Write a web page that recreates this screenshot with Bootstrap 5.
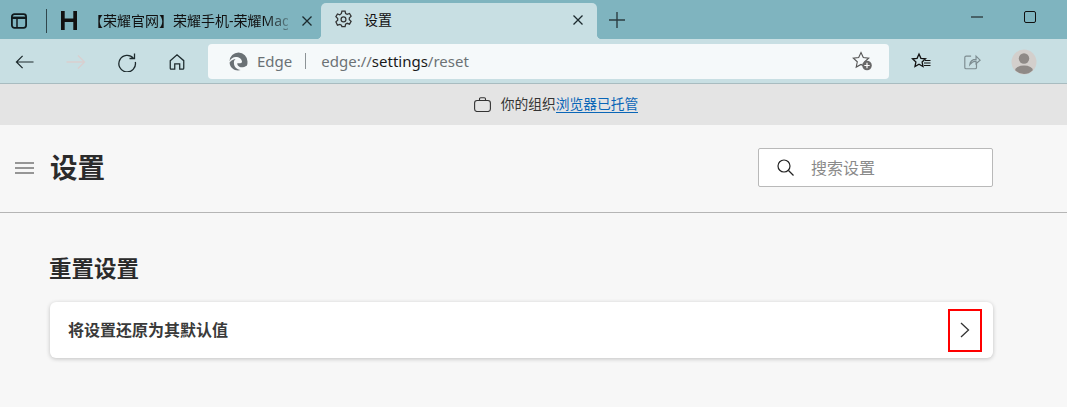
<!DOCTYPE html>
<html lang="zh-CN">
<head>
<meta charset="utf-8">
<title>设置</title>
<link href="https://cdn.jsdelivr.net/npm/bootstrap@5.3.0/dist/css/bootstrap.min.css" rel="stylesheet">
<style>
html,body{height:407px;overflow:hidden}
body{background:#f7f7f7;color:#2b2b2b;font-family:"Noto Sans","Noto Sans CJK SC",sans-serif;font-size:14px}
svg{display:block;flex:none}
.strip{height:39px;background:#7fb4bf}
.strip-left{width:321px;height:39px;padding:2px 0 0 11px}
.divider-v{width:1px;height:24px;background:#30474d;margin:0 14px 0 19px}
.h-logo{width:16px;height:19px;margin-right:12px}
.tab-title{width:199px;font-size:14px;color:#111;white-space:nowrap;line-height:20px;-webkit-mask-image:linear-gradient(90deg,#000 176px,rgba(0,0,0,.3) 199px)}
.tab-active{width:276px;height:36px;margin-top:3px;background:#c8dfe3;border-radius:5px 5px 0 0;padding:0 13px 3px 13px;position:relative}
.tab-active::before,.tab-active::after{content:"";position:absolute;bottom:0;width:5px;height:5px}
.tab-active::before{left:-5px;background:radial-gradient(circle at 0 0,transparent 5px,#c8dfe3 5.500px)}
.tab-active::after{right:-5px;background:radial-gradient(circle at 100% 0,transparent 5px,#c8dfe3 5.500px)}
.tab-active-title{font-size:14px;color:#111;margin-left:11px;line-height:20px}
.plus-wrap{margin-left:11px}
.win-btns{padding:0 31px 6px 0;gap:41px}
.tools{height:45px;background:#c8dfe3;padding-left:15px;box-shadow:inset 0 -1px 0 #a8bcc0}
.tool-slot{width:20px;height:20px;margin-right:31px}
.omni{width:681px;height:35px;background:#f5f9fa;border-radius:4px;margin:-1px 0 0 -11px;padding:0 16px 0 21px}
.omni-edge{color:#6a7175;font-size:15px;margin-left:9px}
.omni-sep{width:1px;height:16px;background:#8c9396;margin:0 15px 0 13px}
.omni-url{color:#6c7275;font-size:15px}
.omni-url b{font-weight:400;color:#1a1a1a}
.tool-right{margin-left:22px}
.share-ico{margin-left:32px}
.avatar-ico{margin-left:30px}
.info-bar{height:41px;background:#e4e4e4;font-size:13.75px;color:#333;padding:0 0 1px 45px}
.info-gap{margin-left:2px}
.info-link{color:#0a66b7;border-bottom:1px solid #0a66b7;line-height:16px;text-decoration:none}
.head-area{height:88px;background:#f7f7f7;border-bottom:1px solid #b5b5b5;padding:0 74px 2px 15px}
.page-title{font-size:27.5px;font-weight:700;margin:0 0 0 16px;line-height:36px;color:#2b2b2b}
.search-box{width:235px;height:39px;background:#fff;border:1px solid #b9b9b9;border-radius:2px;padding-left:18px;color:#8a8a8a;font-size:16px}
.search-box span{margin-left:17px}
.main-area{padding:42px 74px 0 49px}
.sect-title{font-size:22.5px;font-weight:700;line-height:28px;margin:0 0 19px;color:#2b2b2b}
.reset-row{height:56px;margin-left:1px;background:#fff;border-radius:6px;box-shadow:0 1px 4px rgba(0,0,0,.22);padding:0 11px 0 18px;font-size:16px;font-weight:700;color:#3a3a3a}
.red-mark{width:34px;height:43px;border:2px solid #f00}
</style>
</head>
<body>
<div class="strip d-flex">
  <div class="strip-left d-flex align-items-center">
    <svg width="16" height="16" viewBox="0 0 16 16" fill="none" stroke="#10191c" stroke-width="1.800"><rect x=".9" y="1.200" width="14.200" height="13.600" rx="2.500"/><path d="M1 4.800h14" stroke-width="2.400"/><path d="M6 5v9.500" stroke-width="1.500"/></svg>
    <div class="divider-v"></div>
    <svg class="h-logo" viewBox="0 0 16 19" fill="#111"><path d="M0 0h3.700v7.500h8.600V0H16v19h-3.700V11H3.700v8H0z"/></svg>
    <div class="tab-title">【荣耀官网】荣耀手机-荣耀Mag</div>
    <svg class="ms-auto me-2" width="12" height="12" viewBox="0 0 12 12" stroke="#1c2a2e" stroke-width="1.300"><path d="M1.500 1.500l9 9M10.500 1.500l-9 9"/></svg>
  </div>
  <div class="tab-active d-flex align-items-center">
    <svg width="19" height="19" viewBox="0 0 18 18" fill="none" stroke="#333" stroke-width="1.200"><path d="M7.500 1h3l.5 2.300 1.500.8 2.200-.8 1.500 2.600-1.700 1.600v1.700l1.700 1.600-1.500 2.600-2.200-.8-1.500.8-.5 2.300h-3L7 14.400l-1.500-.8-2.200.8L1.800 11.200l1.700-1.500V8L1.800 6.400l1.500-2.600 2.200.8L7 3.300z"/><circle cx="9" cy="8.900" r="2.300"/></svg>
    <span class="tab-active-title">设置</span>
    <svg class="ms-auto" width="12" height="12" viewBox="0 0 12 12" stroke="#1c2a2e" stroke-width="1.300"><path d="M1.500 1.500l9 9M10.500 1.500l-9 9"/></svg>
  </div>
  <div class="plus-wrap d-flex align-items-center">
    <svg width="18" height="18" viewBox="0 0 18 18" stroke="#2b3d42" stroke-width="1.400"><path d="M9 1v16M1 9h16"/></svg>
  </div>
  <div class="win-btns ms-auto d-flex align-items-center">
    <svg width="12" height="12" viewBox="0 0 12 12" stroke="#111" stroke-width="1"><path d="M0 6h12"/></svg>
    <svg width="12" height="12" viewBox="0 0 12 12" fill="none" stroke="#111" stroke-width="1"><rect x=".5" y=".5" width="11" height="11" rx="1.500"/></svg>
  </div>
</div>
<div class="tools d-flex align-items-center">
  <div class="tool-slot d-flex align-items-center"><svg width="19" height="16" viewBox="0 0 20 16" fill="none" stroke="#1d2a2d" stroke-width="1.300"><path d="M19.500 8H1.500M8 1.500L1.500 8 8 14.500"/></svg></div>
  <div class="tool-slot d-flex align-items-center"><svg width="20" height="16" viewBox="0 0 20 16" fill="none" stroke="#d9cfcf" stroke-width="1.300"><path d="M.5 8h18M12 1.500L18.500 8 12 14.500"/></svg></div>
  <div class="tool-slot d-flex align-items-center"><svg width="20" height="20" viewBox="0 0 20 20" fill="none" stroke="#1d2a2d" stroke-width="1.300"><path d="M16.500 6.300A8.300 8.300 0 1 0 18.300 10M17.500 1.500v5h-5"/></svg></div>
  <div class="tool-slot d-flex align-items-center"><svg width="18" height="18" viewBox="0 0 20 20" fill="none" stroke="#1d2a2d" stroke-width="1.400"><path d="M2.500 8.500L10 2l7.500 6.500V17a1 1 0 0 1-1 1H13v-6H7.500v6H3.500a1 1 0 0 1-1-1z"/></svg></div>
  <div class="omni d-flex align-items-center">
    <svg width="19" height="19" viewBox="0 0 19 19"><path fill="#6a7175" d="M9.500.5a9 9 0 0 0-9 8.800c1.200-2.800 3.700-4.400 6.300-4.400 3.300 0 6 2 6.200 4.600 0 1-.6 1.700-1.800 1.700H8.300c-.3 2 1.900 4 4.300 4 1.800 0 3.400-.5 4.700-1.500l.4.400A9 9 0 0 0 18.500 9.500a9 9 0 0 0-9-9z"/><path fill="#6a7175" d="M6.600 7C3 7.500.6 10 .6 10.800c.3 4.600 4.200 7.700 8.400 7.700 1 0 2-.2 2.700-.5-4-.7-6.800-3.300-6.800-7.300 0-1.600.5-2.800 1.700-3.700z"/></svg>
    <span class="omni-edge">Edge</span>
    <div class="omni-sep"></div>
    <span class="omni-url">edge://<b>settings</b>/reset</span>
    <svg class="ms-auto" width="21" height="20" viewBox="0 0 21 20"><path fill="none" stroke="#555" stroke-width="1.100" d="M9 1.500l2.300 5 5.400.6-4 3.700 1.100 5.300L9 13.500l-4.800 2.600 1.100-5.300-4-3.700 5.400-.6z"/><circle cx="15" cy="14.500" r="4.800" fill="#686868"/><path stroke="#fff" stroke-width="1.200" d="M15 11.800v5.400M12.300 14.500h5.400"/></svg>
  </div>
  <div class="tool-right d-flex align-items-center">
    <svg width="20" height="20" viewBox="0 0 20 20" fill="none" stroke="#111" stroke-width="1.300"><path d="M8 2l1.900 4.300 4.600.5-3.400 3.100.9 4.600L8 12.200l-4 2.300.9-4.600L1.500 6.800l4.600-.5z"/><path d="M14 8.500h5.500M13 11h6.500M13 13.500h6.500" stroke-width="1.100"/></svg>
    <svg class="share-ico" width="18" height="18" viewBox="0 0 20 20" fill="none" stroke="#7d8c90" stroke-width="1.300"><path d="M9 3.500H3.500a1.500 1.500 0 0 0-1.500 1.500v11a1.500 1.500 0 0 0 1.500 1.500h10a1.500 1.500 0 0 0 1.500-1.500v-4M7.500 13c.5-4 3-6 7-6V3.500L19 8l-4.500 4V9c-3 0-5 1.500-7 4z"/></svg>
    <svg class="avatar-ico" width="26" height="26" viewBox="0 0 26 26"><defs><clipPath id="avc"><circle cx="13" cy="13" r="12"/></clipPath></defs><circle cx="13" cy="13" r="12.500" fill="#d3cfcc"/><g clip-path="url(#avc)"><circle cx="13" cy="9.500" r="5.200" fill="#8f8a87"/><ellipse cx="13" cy="21.500" rx="9" ry="5" fill="#8f8a87"/></g></svg>
  </div>
</div>
<div class="info-bar d-flex align-items-center justify-content-center">
  <svg class="me-2" width="17" height="15" viewBox="0 0 17 15" fill="none" stroke="#333" stroke-width="1.100"><rect x=".6" y="3.500" width="15.800" height="11" rx="2.500"/><path d="M5.500 3.500V2a1.200 1.200 0 0 1 1.200-1.200h3.600A1.200 1.200 0 0 1 11.500 2v1.500"/></svg>
  <span class="info-gap">你的组织</span><a class="info-link" href="#">浏览器已托管</a>
</div>
<div class="head-area d-flex align-items-center">
  <svg width="19" height="12" viewBox="0 0 19 12" stroke="#777" stroke-width="1.500"><path d="M0 1h19M0 6h19M0 11h19"/></svg>
  <h1 class="page-title">设置</h1>
  <div class="search-box ms-auto d-flex align-items-center">
    <svg width="17" height="17" viewBox="0 0 17 17" fill="none" stroke="#222" stroke-width="1.200"><circle cx="7" cy="7" r="6"/><path d="M11.500 11.500l5 5"/></svg>
    <span>搜索设置</span>
  </div>
</div>
<div class="main-area">
  <h2 class="sect-title">重置设置</h2>
  <div class="reset-row d-flex align-items-center justify-content-between">
    <span>将设置还原为其默认值</span>
    <div class="red-mark d-flex align-items-center justify-content-center">
      <svg width="10" height="16" viewBox="0 0 10 16" fill="none" stroke="#333" stroke-width="1.300"><path d="M1 1l7.500 7L1 15"/></svg>
    </div>
  </div>
</div>
</body>
</html>
